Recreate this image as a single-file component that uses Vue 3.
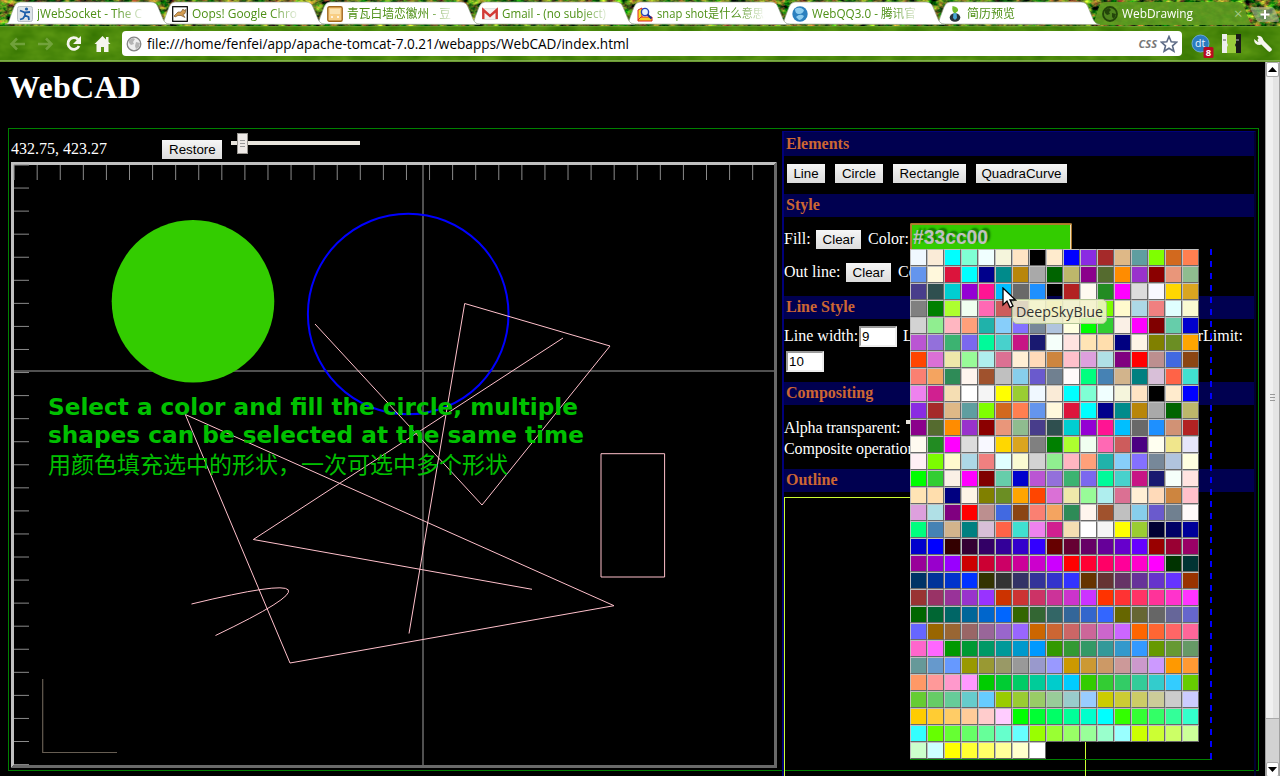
<script setup>
const tabs = [
  { title: 'jWebSocket - The C', icon: 'runner', width: 105 },
  { title: 'Oops! Google Chro', icon: 'cat', width: 105 },
  { title: '青瓦白墙恋徽州 - 豆', icon: 'radio', width: 104 },
  { title: 'Gmail - (no subject)', icon: 'mail', width: 104 },
  { title: 'snap shot是什么意思', icon: 'search', width: 107 },
  { title: 'WebQQ3.0 - 腾讯官', icon: 'qq', width: 104 },
  { title: '简历预览', icon: 'person', width: 48 },
  { title: 'WebDrawing', icon: 'globe', width: 71, active: true },
]

const named = `AliceBlue AntiqueWhite Aqua Aquamarine Azure Beige Bisque Black BlanchedAlmond Blue BlueViolet Brown BurlyWood CadetBlue Chartreuse Chocolate Coral
CornflowerBlue Cornsilk Crimson Cyan DarkBlue DarkCyan DarkGoldenRod DarkGray DarkGreen DarkKhaki DarkMagenta DarkOliveGreen DarkOrange DarkOrchid DarkRed DarkSalmon DarkSeaGreen
DarkSlateBlue DarkSlateGray DarkTurquoise DarkViolet DeepPink DeepSkyBlue DimGray DodgerBlue #D19275 FireBrick FloralWhite ForestGreen Fuchsia Gainsboro GhostWhite Gold GoldenRod
Gray Green GreenYellow HoneyDew HotPink IndianRed Indigo Ivory Khaki Lavender LavenderBlush LawnGreen LemonChiffon LightBlue LightCoral LightCyan LightGoldenRodYellow
LightGrey LightGreen LightPink LightSalmon LightSeaGreen LightSkyBlue #8470FF LightSlateGray LightSteelBlue LightYellow Lime LimeGreen Linen Magenta Maroon MediumAquaMarine MediumBlue
MediumOrchid MediumPurple MediumSeaGreen MediumSlateBlue MediumSpringGreen MediumTurquoise MediumVioletRed MidnightBlue MintCream MistyRose Moccasin NavajoWhite Navy OldLace Olive OliveDrab Orange
OrangeRed Orchid PaleGoldenRod PaleGreen PaleTurquoise PaleVioletRed PapayaWhip PeachPuff Peru Pink Plum PowderBlue Purple Red RosyBrown RoyalBlue SaddleBrown
Salmon SandyBrown SeaGreen SeaShell Sienna Silver SkyBlue SlateBlue SlateGray Snow SpringGreen SteelBlue Tan Teal Thistle Tomato Turquoise
Violet #D02090 Wheat White WhiteSmoke Yellow YellowGreen`.split(/\s+/)

const steps = ['00', '33', '66', '99', 'CC', 'FF']
const websafe = []
for (const g of steps) for (const r of steps) for (const b of steps) websafe.push('#' + r + g + b)
const swatches = [...named.map((c, i) => (i === 42 ? 'transparent' : c)), ...named, ...websafe.slice(1)]

const xTicks = Array.from({ length: 33 }, (_, i) => 14.1 + i * 23.08)
const yTicks = Array.from({ length: 27 }, (_, i) => 165 + i * 23.06)
</script>

<template>
  <div class="screen">
    <header class="chrome">
      <svg class="grass" width="1280" height="62">
        <filter id="blades" x="0" y="0" width="100%" height="100%" color-interpolation-filters="sRGB">
          <feTurbulence type="fractalNoise" baseFrequency="0.13 0.2" numOctaves="3" seed="8" />
          <feColorMatrix values="1.9 0 0 0 -0.63  0.9 1.2 0 0 -0.6  0.4 0 0 0 -0.1  0 0 0 0 1" />
        </filter>
        <filter id="lawn" x="0" y="0" width="100%" height="100%" color-interpolation-filters="sRGB">
          <feTurbulence type="fractalNoise" baseFrequency="0.04 0.07" numOctaves="3" seed="3" />
          <feColorMatrix values="0.22 0 0 0 0.18  0.2 0 0 0 0.43  0.1 0 0 0 -0.01  0 0 0 0 1" />
        </filter>
        <rect width="1280" height="26" filter="url(#blades)" />
        <rect y="26" width="1280" height="36" filter="url(#lawn)" />
        <rect y="26" width="1280" height="1" fill="#fff" opacity=".12" />
        <rect y="60" width="1280" height="1" fill="#b4d48a" opacity=".5" />
        <rect y="61" width="1280" height="1" fill="#6d9c34" />
      </svg>
      <div class="tabs">
        <div v-for="(t, i) in tabs" :key="i" class="tab" :class="{ active: t.active }" :style="{ zIndex: 10 - i }">
          <svg class="shape" width="172" height="25">
            <path v-if="t.active" d="M0 25 C4 25 4 21 6 16 L9 7 Q11 2 15 2 H148 Q152 2 154 7 L159 20 Q161 25 166 25Z" fill="#5c9a20" fill-opacity=".93" />
            <path v-else d="M0 24 C4 24 4 20 6 15 L9 7 Q11 2 15 2 H146 Q151 2 153 7 L158 19 Q160 24 165 24.5Z" fill="#fff" stroke="#8d9a84" stroke-opacity=".65" />
          </svg>
          <svg class="fav" width="16" height="16" viewBox="0 0 16 16">
            <g v-if="t.icon === 'runner'"><rect x=".5" y=".5" width="15" height="15" rx="2" fill="#dde3e8" stroke="#b9c0c6" /><circle cx="9.500" cy="3" r="1.600" fill="#1b5faa" /><path d="M3 4.500l5 2 5-.5M8 6v3.500l3.500 1.500.5 3M8 9.500l-2 3-3 1" stroke="#1b5faa" stroke-width="1.800" fill="none" /></g>
            <g v-else-if="t.icon === 'cat'"><rect x=".7" y=".7" width="14.600" height="14.600" fill="#fff" stroke="#000" stroke-width="1.200" /><path d="M2 10l4-4 3 0 2-3 1 1.500 2-1-1 4-2 1 2 3-4-2-3 0-3 1.500z" fill="#d49c50" stroke="#6b4a20" stroke-width=".6" /></g>
            <g v-else-if="t.icon === 'radio'"><rect x=".8" y=".8" width="14.400" height="14.400" rx="1.500" fill="#f8ce85" stroke="#a2671c" stroke-width="1.400" /><rect x="3" y="3" width="10" height="5" fill="#fbe3b2" /><path d="M4 11h2M10 11h2" stroke="#fff" stroke-width="1.500" /></g>
            <g v-else-if="t.icon === 'mail'"><rect x="0" y="2.500" width="16" height="11" rx="1" fill="#f4f0ef" stroke="#ccc" stroke-width=".5" /><path d="M1.300 13V4L8 10l6.700-6v9" fill="none" stroke="#d33a35" stroke-width="2.400" /></g>
            <g v-else-if="t.icon === 'search'"><path d="M1 4l4-2v11l-4 1z" fill="#f7dc24" stroke="#d22" /><path d="M1 14l3-3h11v4H1z" fill="#f5cf1d" stroke="#d22" /><circle cx="8" cy="6" r="3.600" fill="#e2f0ff" stroke="#2444b8" stroke-width="1.400" /><path d="M10.500 8.500l4 4" stroke="#182b90" stroke-width="2" /></g>
            <g v-else-if="t.icon === 'qq'"><circle cx="8" cy="8" r="7.700" fill="#2c80bf" /><path d="M3 3q5-3 9 1-1 4-5 4-4 0-4-5M4 11q4-4 8-1-2 4-5 4z" fill="#8dccee" /></g>
            <g v-else-if="t.icon === 'person'"><ellipse cx="8" cy="11.500" rx="5.300" ry="4.300" fill="#29343a" /><path d="M6.500 7h3l.5 5-2 2-2-2z" fill="#48a6d5" /><path d="M5.500 0q6.500 1 5.500 5l-3 2.500Q4.500 6 5.500 0z" fill="#71bd2a" /></g>
            <g v-else><circle cx="8" cy="8" r="7" fill="#4f851e" stroke="#23450a" stroke-width="1.800" /><path d="M3 4l4-2 2 2-2 2 1 2-3 1-2-2zM10 7l4 1-2 5-2-2z" fill="#23450a" /></g>
          </svg>
          <span class="label"><svg height="20" width="110"><text x="0" y="14" :textLength="t.width" lengthAdjust="spacingAndGlyphs" :fill="t.active ? '#fff' : '#4e9016'">{{ t.title }}</text></svg></span>
          <span v-if="t.active" class="close">×</span>
        </div>
        <div class="plus"><svg width="30" height="17"><path d="M2 1h19q3 0 4 3l4 9q1 3-2 3H10q-3 0-4-3L1 4Q0 1 2 1z" fill="#a8b894" fill-opacity=".6" /><path d="M15 4v9M10.500 8.500h9" stroke="#fff" stroke-width="2" /></svg></div>
      </div>
      <div class="toolbar">
        <svg class="nav" width="112" height="26" viewBox="0 0 112 26">
          <path d="M25 13H12M17 7.500L11.500 13 17 18.500M38 13h13M46 7.500L51.500 13 46 18.500" fill="none" stroke="#8cb45e" stroke-width="2.500" opacity=".6" />
          <path d="M78 8.500A5.800 5.800 0 1 0 79 15" fill="none" stroke="#f5f5ee" stroke-width="2.800" /><path d="M81 5v8h-8z" fill="#f5f5ee" />
          <path d="M102.500 5l8 8h-2v8h-4.500v-5h-3v5h-4.500v-8h-2z" fill="#f5f5ee" /><path d="M106 6h2.500v5H106z" fill="#f5f5ee" />
        </svg>
        <div class="omnibox">
          <svg width="16" height="16" viewBox="0 0 16 16"><circle cx="8" cy="8" r="6.800" fill="#efefef" stroke="#858585" stroke-width="1.300" /><path d="M3 4l4-2 2 1-2 3 1 2-3 1-2-2zM10 6l4 1-1 4-3 2-1-3z" fill="#b5b5b5" /></svg>
          <svg class="url" width="500" height="25"><text x="0" y="18" textLength="482" lengthAdjust="spacingAndGlyphs">file:///home/fenfei/app/apache-tomcat-7.0.21/webapps/WebCAD/index.html</text></svg>
          <span class="css">CSS</span>
          <svg width="18" height="18" viewBox="0 0 18 18"><path d="M9 1.500l2.200 5.200 5.600.4-4.300 3.700 1.400 5.500L9 13.300l-4.900 3 1.400-5.500L1.200 7.100l5.600-.4z" fill="#fff" stroke="#5d6b86" stroke-width="1.600" /></svg>
        </div>
        <svg class="ext" width="98" height="30" viewBox="0 0 98 30">
          <circle cx="18.500" cy="14.500" r="8.500" fill="#2b7bc0" stroke="#68a9d8" /><text x="13" y="18" font-size="10.500" fill="#e9f5ff">dt</text>
          <rect x="21.500" y="18" width="10" height="11" rx="1.500" fill="#ba0a20" /><text x="23.800" y="27" font-size="9.500" font-weight="bold" fill="#fff">8</text>
          <rect x="40" y="6" width="19" height="18" fill="#9acb3c" /><path d="M40 5h5v9l1 2-1 2v6h-5z" fill="#eee" /><path d="M59 5h-5v9l-1 2 1 2v6h5z" fill="#191919" /><path d="M41 11h3M54 11h3" stroke="#888" stroke-width="1.500" />
          <path d="M78 11l9.500 9.500" stroke="#f5f5ee" stroke-width="4.500" stroke-linecap="round" /><path d="M72 10q0 6 6 6 5-2 3-6-2-4-6-3l3 4-2 2z" fill="#f5f5ee" />
        </svg>
      </div>
    </header>

    <div class="viewport">
      <main class="page">
        <h1>WebCAD</h1>
        <div class="app">
          <section class="left">
            <div class="status">
              <span class="coords">432.75, 423.27</span>
              <button>Restore</button>
              <div class="slider"><i></i></div>
            </div>
            <svg class="board" width="766" height="606" viewBox="11 162 766 606">
              <path d="M11 162H777L774 165H14V765L11 768z" fill="#c0c0c0" /><path d="M777 162V768H11L14 765H774V165z" fill="#696969" />
              <g stroke="#8a8a8a">
                <path v-for="x in xTicks" :key="'x' + x" :d="`M${x} 165v15`" />
                <path v-for="y in yTicks" :key="'y' + y" :d="`M14 ${y}h15`" />
              </g>
              <path d="M423 165V765M14 371H774" stroke="#505050" stroke-width="2" />
              <circle cx="193" cy="301.300" r="81.300" fill="#33cc00" />
              <circle cx="408.200" cy="314" r="100.300" fill="none" stroke="#0000ff" stroke-width="2" />
              <g fill="none" stroke="#ffc0cb">
                <path d="M315 324L482 505L610 346L464.700 303.500L409 633.500" />
                <path d="M563 338L253.300 539.500L532 589.300" />
                <path d="M185.300 414.500L614 605.700L290 663z" />
                <path d="M601 453.700H664.600V577H601z" />
                <path d="M191.500 604Q373 560 215.500 635.500" />
              </g>
              <path d="M42.700 679V752.500H117" fill="none" stroke="#665d52" stroke-width="1.200" />
              <g fill="#00c000" class="note">
                <text x="48" y="415" textLength="530" lengthAdjust="spacingAndGlyphs">Select a color and fill the circle, multiple</text>
                <text x="48" y="443" textLength="536" lengthAdjust="spacingAndGlyphs">shapes can be selected at the same time</text>
                <text x="48" y="473" class="zh" textLength="460" lengthAdjust="spacingAndGlyphs">用颜色填充选中的形状，一次可选中多个形状</text>
              </g>
            </svg>
          </section>
          <aside class="panel">
            <h2 class="first">Elements</h2>
            <div class="row elements"><button>Line</button><button>Circle</button><button>Rectangle</button><button>QuadraCurve</button></div>
            <h2>Style</h2>
            <div class="row fill"><span>Fill:</span><button>Clear</button><span>Color:</span>
              <div class="anchor">
                <div class="hex">#33cc00</div>
                <div class="picker">
                  <i v-for="(c, i) in swatches" :key="i" :style="{ backgroundColor: c }"></i>
                  <div class="tip"><svg width="88" height="20"><text x="0" y="14" textLength="87" lengthAdjust="spacingAndGlyphs">DeepSkyBlue</text></svg></div>
                  <svg class="cursor" width="16" height="22" viewBox="0 0 16 22"><path d="M1 1v17l4-4 3 6.500 3-1.500-3-6h5.500z" fill="#fff" stroke="#000" stroke-width="1.300" /></svg>
                </div>
              </div>
            </div>
            <div class="row stroke"><span>Out line:</span><button>Clear</button><span>Color:</span><div class="hex dark"></div></div>
            <h2>Line Style</h2>
            <div class="row width"><span>Line width:</span><div class="num">9</div><span class="cap">LineCap:</span><span class="miter">MiterLimit:</span></div>
            <div class="row limit"><div class="num">10</div></div>
            <h2>Compositing</h2>
            <div class="row alpha"><span>Alpha transparent:</span><i></i></div>
            <div class="row comp">Composite operation:</div>
            <h2>Outline</h2>
            <div class="outline"></div>
          </aside>
        </div>
      </main>
      <div class="scroll">
        <div class="arrow"><svg width="9" height="5"><path d="M0 5L4.500 0 9 5z" /></svg></div>
        <div class="thumb"><i></i><i></i><i></i></div>
        <div class="arrow"><svg width="9" height="5"><path d="M0 0h9L4.500 5z" /></svg></div>
      </div>
    </div>
  </div>
</template>

<style>
html, body { background: #000; overflow: hidden; }
</style>
<style scoped>
* { box-sizing: border-box; }
.screen { width: 1280px; height: 776px; overflow: hidden; background: #000; color: #fff; font: 16px "Liberation Serif", serif; }
.chrome { position: relative; height: 62px; font-family: "Open Sans", "Noto Sans CJK SC", sans-serif; }
.grass { position: absolute; left: 0; top: 0; }
.tabs { position: relative; display: flex; height: 26px; padding-left: 5px; }
.tab { position: relative; width: 155px; flex: none; display: flex; padding: 6px 0 0 12px; gap: 4px; }
.shape { position: absolute; left: 0; top: 0; }
.fav { position: relative; flex: none; }
.label { position: relative; flex: none; width: 110px; height: 20px; font-size: 12px; -webkit-mask-image: linear-gradient(90deg, #000 72%, transparent 99%); mask-image: linear-gradient(90deg, #000 72%, transparent 99%); margin-top: -2px; }
.label svg, .tip svg { display: block; }
.close { position: relative; font-size: 15px; line-height: 15px; margin-left: -2px; color: #a6c884; }
.plus { padding: 6px 0 0 5px; }
.toolbar { position: relative; display: flex; height: 36px; padding-top: 5px; }
.nav { margin-right: 10px; flex: none; }
.omnibox { width: 1060px; height: 25px; background: #fff; border-radius: 4px; display: flex; align-items: center; padding: 0 4px; flex: none; }
.url { margin-left: 5px; font-size: 14px; }
.css { margin-left: auto; margin-right: 3px; font: italic bold 11px "Open Sans", sans-serif; color: #777; }
.ext { margin-top: -2px; flex: none; }
.viewport { display: flex; height: 714px; }
.page { width: 1265px; height: 714px; overflow: hidden; padding: 0 6px 0 8px; }
h1 { margin: 0; font-size: 32px; line-height: 36px; height: 66px; padding-top: 7px; letter-spacing: .25px; }
.app { height: 643px; width: 1251px; border: 1px solid #008000; display: flex; padding: 2px; }
.left { width: 771px; flex: none; }
.status { height: 31px; display: flex; align-items: flex-start; }
.coords { width: 151px; line-height: 18px; padding-top: 9px; }
button { font: 13.333px "Liberation Sans", sans-serif; color: #000; height: 19px; padding: 0 7px; border: 0; background: linear-gradient(#f6f6f6, #dcdcdc); line-height: 19px; flex: none; }
.status button { width: 60px; margin-top: 9px; }
.slider { width: 129px; height: 4px; background: #e8e4dc; margin: 10px 0 0 9px; padding-left: 6px; }
.slider i { display: block; position: relative; width: 11px; height: 21px; top: -8px; border: 1px solid #989590; background: linear-gradient(transparent 6px, #999 6px, #999 7px, transparent 7px, transparent 9px, #999 9px, #999 10px, transparent 10px, transparent 12px, #999 12px, #999 13px, transparent 13px) 2px 0 / 5px 100% no-repeat, #eeeae7; }
.board { display: block; }
.note { font: bold 23px "DejaVu Sans", sans-serif; }
.note .zh { font: 23px "Noto Sans CJK SC", sans-serif; }
.panel { width: 474px; height: 720px; flex: none; border: 2px solid #000030; border-left-color: #00007a; border-top: 1px solid #00007a; }
h2 { margin: 0; height: 23px; line-height: 21px; padding-left: 2px; background: #000050; color: #cc6633; font-size: 16px; }
.first { height: 24px; line-height: 24px; }
.row { display: flex; white-space: nowrap; }
.elements { height: 38px; padding: 8px 0 0 3px; gap: 10px; }
.elements button:nth-child(1) { width: 38px; }
.elements button:nth-child(2) { width: 48px; }
.elements button:nth-child(3) { width: 73px; }
.elements button:nth-child(4) { width: 91px; }
.elements button, .fill button, .stroke button { padding: 0; }
.fill { height: 38px; padding-top: 13px; line-height: 18px; }
.fill button { width: 45px; margin-right: 7px; }
.fill > span:first-child { width: 32px; }
.fill > span:nth-child(3) { width: 42px; }
.anchor { position: relative; margin-top: -7px; }
.hex { width: 162px; height: 30px; border: 2px solid #b08030; border-right: 2px solid #f4dcb0; outline: 1px solid #a87428; outline-offset: -1px; border-radius: 2px; background: #33cc00; color: #c0c0c0; font: bold 19.300px/26px "Liberation Sans", sans-serif; padding-left: 1px; text-shadow: 3px -2px 2px #107000; }
.picker { position: absolute; z-index: 20; left: 0; top: 26px; width: 302px; height: 511px; border-bottom: 1px solid #008000; display: grid; grid-template-columns: repeat(17, 17px); grid-auto-rows: 17px; background: repeating-linear-gradient(#00f 0 6px, transparent 6px 12px) right top / 2px 100% no-repeat; }
.picker > i { border: 1px solid #c0c0c0; border-right-color: #696969; border-bottom-color: #696969; }
.tip { position: absolute; left: 102px; top: 50px; width: 95px; height: 25px; border-radius: 5px; border: 1px solid #b4c696; background: rgba(242, 242, 202, .88); color: #333; padding: 3px 0 0 3px; font: 14px "Open Sans", sans-serif; }
.tip text { fill: #333; }
.cursor { position: absolute; left: 92px; top: 38px; }
.stroke { height: 41px; padding-top: 8px; line-height: 18px; }
.stroke > span:first-child { width: 62px; }
.stroke button { width: 45px; margin-right: 7px; }
.stroke > span:nth-child(3) { width: 42px; }
.hex.dark { margin-top: -7px; height: 24px; background: #000; border: 2px solid #e8e4dc; outline: 0; }
.width { height: 31px; padding-top: 7px; line-height: 20px; }
.width > span:first-child { width: 75px; }
.num { width: 38px; height: 21px; border: 2px solid #9a9a9a; border-right-color: #eee; border-bottom-color: #eee; background: #fff; color: #000; font: 13.333px/17px "Liberation Sans", sans-serif; padding-left: 1px; }
.cap { margin-left: 6px; }
.miter { margin-left: auto; margin-right: 11px; }
.limit { height: 32px; padding: 1px 0 0 2px; }
.alpha { height: 34px; padding-top: 13px; line-height: 20px; letter-spacing: -.13px; }
.alpha i { width: 129px; height: 4px; margin: 2px 0 0 6px; background: #e8e4dc; }
.comp { height: 30px; line-height: 20px; letter-spacing: -.13px; }
.outline { margin-top: 5px; width: 302px; height: 320px; border: 1px solid #ccff33; }
.scroll { width: 15px; height: 714px; display: flex; flex-direction: column; background: #d2d2d2; border-left: 1px solid #a0a0a0; border-right: 1px solid #a0a0a0; }
.arrow { height: 15px; background: #fff; border: 1px solid #aaa; border-radius: 2px; display: flex; align-items: center; justify-content: center; flex: none; }
.thumb { height: 642px; margin-bottom: 43px; flex: none; background: linear-gradient(90deg, #f0f0f0 55%, #e4e4e4 55%); border-bottom: 1px solid #aaa; display: flex; flex-direction: column; align-items: center; justify-content: center; gap: 2px; }
.thumb i { width: 5px; height: 1px; background: #999; }
</style>
